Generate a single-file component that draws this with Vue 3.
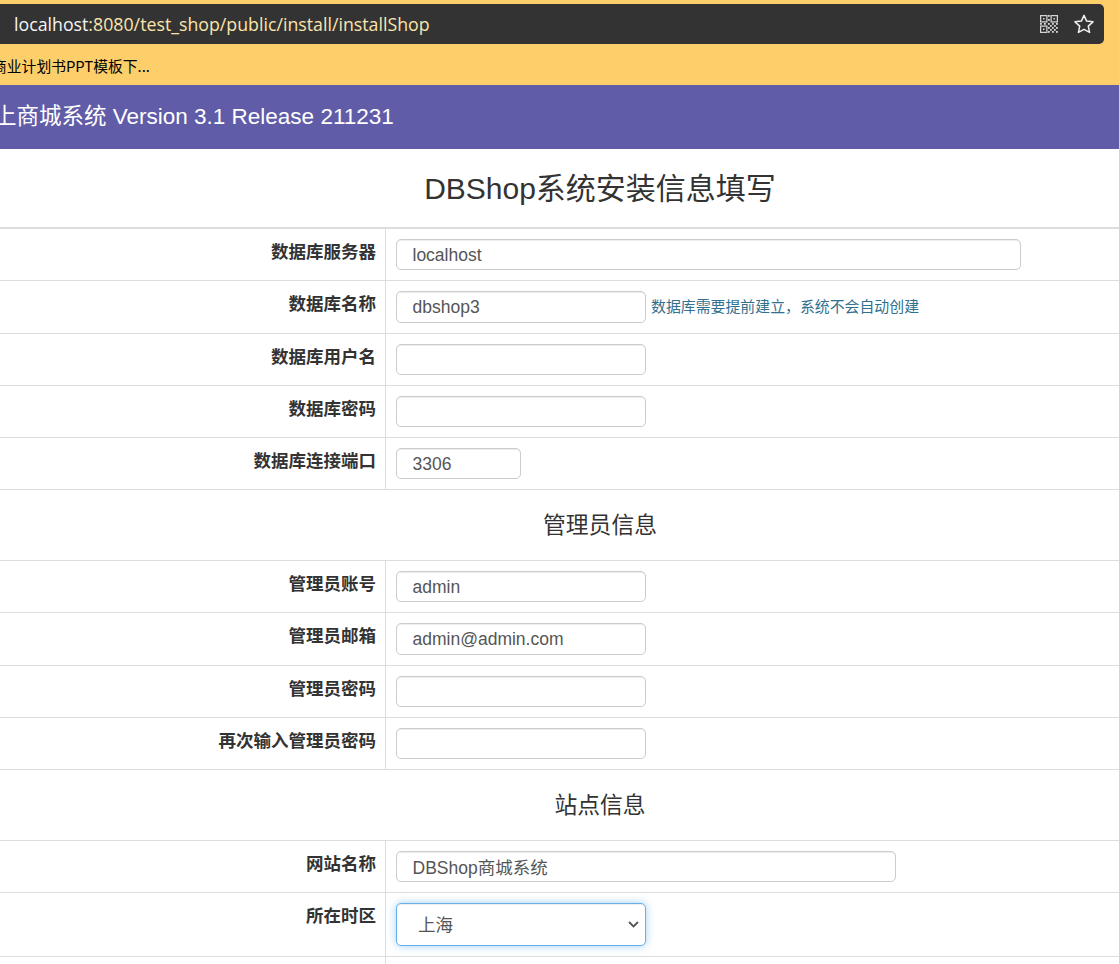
<script setup>
const dbRows = [
  { label: '数据库服务器', value: 'localhost', size: 'xl' },
  { label: '数据库名称', value: 'dbshop3', size: 'md', hint: '数据库需要提前建立，系统不会自动创建' },
  { label: '数据库用户名', value: '', size: 'md' },
  { label: '数据库密码', value: '', size: 'md' },
  { label: '数据库连接端口', value: '3306', size: 'sm' }
]
const adminRows = [
  { label: '管理员账号', value: 'admin', size: 'md' },
  { label: '管理员邮箱', value: 'admin@admin.com', size: 'md' },
  { label: '管理员密码', value: '', size: 'md' },
  { label: '再次输入管理员密码', value: '', size: 'md' }
]
const qrCells = [
  [4,0],[4,2],[0,4],[2,4],
  [4,4],[6,4],[8,4],[5,5],[7,5],[4,6],[6,6],[8,6],[5,7],[7,7],[4,8],[6,8],[8,8]
]
</script>

<template>
  <div class="page">
    <div class="chrome">
      <div class="address">
        <span class="url"><span class="host">localhost</span>:8080/test_shop/public/install/installShop</span>
        <div class="tools">
          <svg class="qr" viewBox="0 0 18 18" width="18" height="18">
            <g fill="none" stroke="#d4d4d4" stroke-width="1.25">
              <rect x=".6" y=".6" width="6.3" height="6.3" />
              <rect x="11.1" y=".6" width="6.3" height="6.3" />
              <rect x=".6" y="11.1" width="6.3" height="6.3" />
            </g>
            <g fill="#d4d4d4">
              <rect x="3" y="3" width="1.5" height="1.5" />
              <rect x="13.5" y="3" width="1.5" height="1.5" />
              <rect x="3" y="13.5" width="1.5" height="1.5" />
              <rect v-for="(c, i) in qrCells" :key="i" :x="c[0] * 2" :y="c[1] * 2" width="1.8" height="1.8" />
            </g>
          </svg>
          <svg class="star" viewBox="0 0 20 20" width="20" height="20">
            <path d="M10 1.4l2.6 5.7 6.4.75-4.72 4.3 1.27 6.25L10 15.3l-5.55 3.1 1.27-6.25L1 7.85l6.4-.75z" fill="none" stroke="#f0f0f0" stroke-width="1.5" stroke-linejoin="round" />
          </svg>
        </div>
      </div>
      <div class="bookmark">商业计划书PPT模板下...</div>
    </div>

    <header class="banner">
      <span class="banner-text">上商城系统 Version 3.1 Release 211231</span>
    </header>

    <main class="content">
      <h3 class="title">DBShop系统安装信息填写</h3>
      <div class="rule"></div>

      <div v-for="row in dbRows" :key="row.label" class="row">
        <div class="label">{{ row.label }}</div>
        <div class="field">
          <input class="input" :class="row.size" :value="row.value" />
          <span v-if="row.hint" class="hint">{{ row.hint }}</span>
        </div>
      </div>

      <h4 class="section">管理员信息</h4>

      <div v-for="row in adminRows" :key="row.label" class="row">
        <div class="label">{{ row.label }}</div>
        <div class="field">
          <input class="input" :class="row.size" :value="row.value" />
        </div>
      </div>

      <h4 class="section">站点信息</h4>

      <div class="row">
        <div class="label">网站名称</div>
        <div class="field">
          <input class="input lg" value="DBShop商城系统" />
        </div>
      </div>
      <div class="row tall">
        <div class="label">所在时区</div>
        <div class="field">
          <div class="select-wrap">
            <select class="select">
              <option>上海</option>
            </select>
            <svg class="chevron" viewBox="0 0 11 7" width="11" height="7">
              <path d="M1 1l4.5 4.5L10 1" fill="none" stroke="#555" stroke-width="1.8" />
            </svg>
          </div>
        </div>
      </div>
      <div class="row stub">
        <div class="label"></div>
        <div class="field"></div>
      </div>
    </main>
  </div>
</template>

<style>
html, body { margin: 0; overflow: hidden; background: #fff; }
</style>

<style scoped>
.page {
  width: 1119px;
  height: 964px;
  overflow: hidden;
  font-family: "Liberation Sans", "Noto Sans CJK SC", sans-serif;
  font-size: 17.5px;
  color: #333;
  background: #fff;
}
.chrome {
  height: 85px;
  padding-top: 4px;
  box-sizing: border-box;
  background: #fdcf6b;
}
.address {
  width: 1104px;
  height: 40px;
  padding: 0 10px 0 14px;
  box-sizing: border-box;
  display: flex;
  align-items: center;
  justify-content: space-between;
  background: #333;
  border-radius: 0 5px 5px 0;
}
.url {
  font-family: "Open Sans", "Noto Sans", sans-serif;
  font-size: 17.75px;
  color: #fce4ad;
  white-space: nowrap;
}
.host { color: #f5f5f5; }
.tools {
  display: flex;
  align-items: center;
  gap: 16px;
}
.qr, .star { display: block; }
.bookmark {
  height: 41px;
  line-height: 44px;
  margin-left: -8px;
  font-family: "Noto Sans CJK SC", sans-serif;
  font-size: 14.8px;
  color: #000;
  white-space: nowrap;
}
.banner {
  height: 64px;
  line-height: 64px;
  background: #605ca8;
  color: #fff;
  font-size: 22.5px;
  white-space: nowrap;
}
.banner-text { margin-left: -6px; display: inline-block; }
.content { width: 1200px; }
.title {
  margin: 0;
  height: 78px;
  line-height: 80px;
  box-sizing: border-box;
  text-align: center;
  font-size: 30px;
  font-weight: 400;
}
.rule { height: 2px; background: #ddd; }
.row {
  display: grid;
  grid-template-columns: 386px 1fr;
  height: 52.25px;
  box-sizing: border-box;
  border-bottom: 1px solid #ddd;
}
.row.tall { height: 64px; }
.row.stub { height: 20px; border-bottom: 0; }
.label {
  box-sizing: border-box;
  padding: 11px 9px 0 0;
  border-right: 1px solid #ddd;
  text-align: right;
  font-weight: 700;
  line-height: 24px;
}
.field {
  display: flex;
  align-items: flex-start;
  padding: 10px 0 0 10px;
}
.input {
  height: 31.25px;
  padding: 1px 15.5px 0;
  box-sizing: border-box;
  border: 1px solid #ccc;
  border-radius: 5px;
  font: inherit;
  color: #555;
  background: #fff;
  outline: none;
  box-shadow: inset 0 1px 1px rgba(0, 0, 0, .075);
}
.input.xl { width: 625px; }
.input.lg { width: 500px; }
.input.md { width: 250px; }
.input.sm { width: 125px; }
.hint {
  margin-left: 5px;
  line-height: 33px;
  font-size: 14.9px;
  color: #31708f;
  white-space: nowrap;
}
.section {
  margin: 0;
  height: 70.75px;
  line-height: 70px;
  box-sizing: border-box;
  border-bottom: 1px solid #ddd;
  text-align: center;
  font-size: 22.8px;
  font-weight: 400;
}
.select-wrap {
  position: relative;
  width: 250px;
  height: 43px;
}
.select {
  display: block;
  width: 100%;
  height: 100%;
  padding: 0 21px;
  box-sizing: border-box;
  border: 1px solid #66afe9;
  border-radius: 5px;
  font: inherit;
  font-size: 17.5px;
  color: #555;
  background: #fff;
  outline: none;
  appearance: none;
  box-shadow: inset 0 1px 1px rgba(0, 0, 0, .075), 0 0 8px rgba(102, 175, 233, .6);
}
.chevron {
  position: absolute;
  top: 18px;
  right: 7px;
  pointer-events: none;
}
</style>
